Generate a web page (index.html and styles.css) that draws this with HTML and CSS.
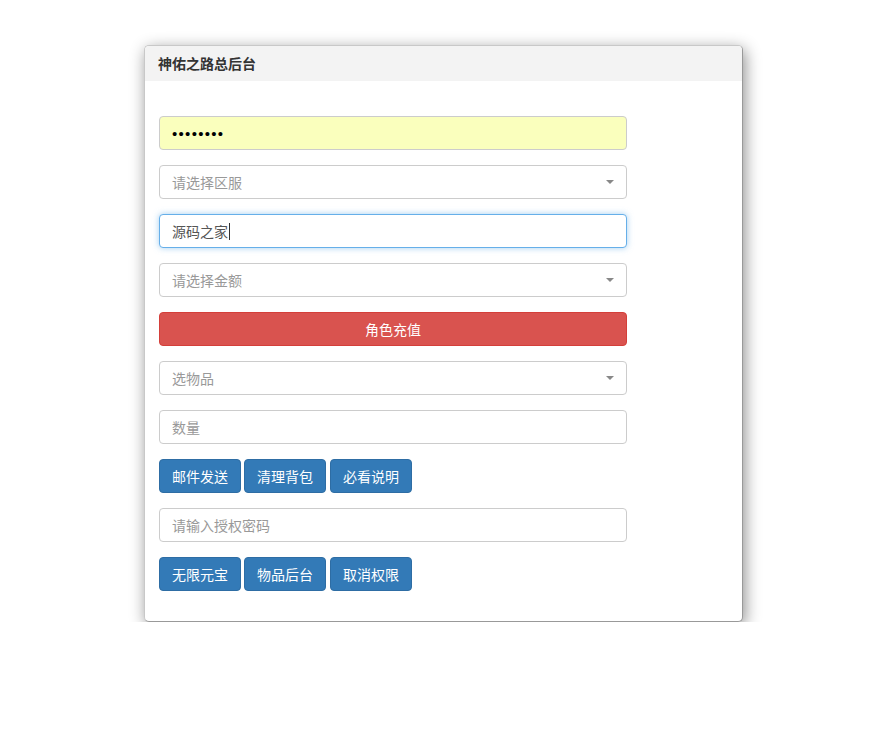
FILE: index.html
```html
<!DOCTYPE html>
<html lang="zh-CN">
<head>
<meta charset="utf-8">
<title>神佑之路总后台</title>
<link rel="stylesheet" href="styles.css">
</head>
<body>
<div class="dialog">
  <div class="dialog-title">神佑之路总后台</div>
  <div class="dialog-body">
    <input class="field field-autofill" type="password" value="12345678">
    <div class="select"><span class="placeholder">请选择区服</span><span class="caret"></span></div>
    <div class="field field-focus"><span class="value">源码之家</span><span class="cursor"></span></div>
    <div class="select"><span class="placeholder">请选择金额</span><span class="caret"></span></div>
    <button class="btn btn-danger btn-block">角色充值</button>
    <div class="select"><span class="placeholder">选物品</span><span class="caret"></span></div>
    <div class="field"><span class="placeholder">数量</span></div>
    <div class="btn-row">
      <button class="btn btn-primary">邮件发送</button>
      <button class="btn btn-primary">清理背包</button>
      <button class="btn btn-primary">必看说明</button>
    </div>
    <div class="field"><span class="placeholder">请输入授权密码</span></div>
    <div class="btn-row">
      <button class="btn btn-primary">无限元宝</button>
      <button class="btn btn-primary">物品后台</button>
      <button class="btn btn-primary">取消权限</button>
    </div>
  </div>
</div>
</body>
</html>
```
FILE: styles.css
```css
* { box-sizing: border-box; }
html, body { margin: 0; padding: 0; background: #fff; }
body {
  font-family: "Noto Sans CJK SC", "Liberation Sans", sans-serif;
  font-size: 14px;
  color: #333;
  padding: 45px 0 0 144px;
}
.dialog {
  width: 599px;
  height: 577px;
  background: #fff;
  border: 1px solid #c8c8c8;
  border-right-color: #999;
  border-bottom-color: #999;
  border-radius: 5px;
  box-shadow: 2px 4px 16px rgba(0,0,0,.45);
}
.dialog-title {
  height: 35px;
  background: #f3f3f3;
  border-radius: 4px 4px 0 0;
  font-size: 14px;
  font-weight: bold;
  color: #333;
  line-height: 35px;
  padding-left: 13px;
}
.dialog-body {
  padding: 35px 0 0 14px;
  display: flex;
  flex-direction: column;
  gap: 15px;
}
.field, .select {
  width: 468px;
  height: 34px;
  border: 1px solid #ccc;
  border-radius: 4px;
  background: #fff;
  padding: 0 12px;
  display: flex;
  align-items: center;
  font-family: inherit;
  font-size: 14px;
  line-height: 20px;
}
.field-autofill {
  background: #faffbd;
  color: #000;
  outline: none;
  font-family: "Liberation Sans", sans-serif;
  font-size: 15px;
  letter-spacing: 1.3px;
}
.field-focus {
  border-color: #66afe9;
  box-shadow: 0 0 6px rgba(102,175,233,.6);
}
.placeholder { color: #999; }
.value { color: #555; }
.cursor {
  display: inline-block;
  width: 1px;
  height: 17px;
  background: #333;
  margin-left: 1px;
}
.select { justify-content: space-between; padding-right: 12px; }
.caret {
  width: 0; height: 0;
  border-left: 4px solid transparent;
  border-right: 4px solid transparent;
  border-top: 4px solid #888;
}
.btn {
  height: 34px;
  border: 1px solid transparent;
  border-radius: 4px;
  padding: 0 12px;
  font-family: inherit;
  font-size: 14px;
  color: #fff;
  cursor: pointer;
  line-height: 20px;
}
.btn-block { width: 468px; }
.btn-danger { background: #d9534f; border-color: #d43f3a; }
.btn-primary { background: #337ab7; border-color: #2e6da4; width: 82px; padding: 0; }
.btn-row { display: flex; gap: 3px; }
.btn-row .btn:nth-child(3) { margin-left: 1px; }
```
